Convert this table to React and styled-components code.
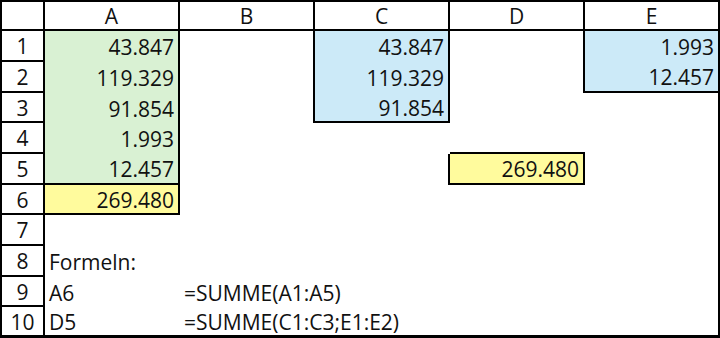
import styled, { createGlobalStyle } from "styled-components";

const GlobalStyle = createGlobalStyle`
  html, body {
    margin: 0;
    padding: 0;
    background: #ffffff;
  }
`;

const Sheet = styled.div`
  display: grid;
  grid-template-columns: 45px repeat(5, 135px);
  grid-template-rows: 31px 31px 31px 30px 31px 31px 30px 31px 31px 30px 31px;
  width: 720px;
  height: 338px;
  font-family: "Open Sans", "Liberation Sans", sans-serif;
  font-size: 21px;
  color: #111;
  box-sizing: border-box;
`;

const Cell = styled.div`
  box-sizing: border-box;
  display: flex;
  align-items: center;
  justify-content: ${(p) =>
    p.$align === "right" ? "flex-end" : p.$align === "center" ? "center" : "flex-start"};
  padding: 1px 4px 0 4px;
  background: ${(p) => p.$fill || "transparent"};
  border-right: ${(p) => (p.$r ? "2px solid #000" : "none")};
  border-bottom: ${(p) => (p.$b ? `${p.$b}px solid #000` : "none")};
  border-left: ${(p) => (p.$l ? "2px solid #000" : "none")};
  border-top: ${(p) => (p.$t ? "2px solid #000" : "none")};
  white-space: nowrap;
  overflow: visible;
  min-width: 0;
`;

const GREEN = "#d9f1d3";
const BLUE = "#cceaf8";
const YELLOW = "#fffb9d";

const cols = ["A", "B", "C", "D", "E"];

const values = {
  A1: "43.847",
  A2: "119.329",
  A3: "91.854",
  A4: "1.993",
  A5: "12.457",
  A6: "269.480",
  C1: "43.847",
  C2: "119.329",
  C3: "91.854",
  D5: "269.480",
  E1: "1.993",
  E2: "12.457",
  A8: "Formeln:",
  A9: "A6",
  A10: "D5",
  B9: "=SUMME(A1:A5)",
  B10: "=SUMME(C1:C3;E1:E2)",
};

const textCells = ["A8", "A9", "A10", "B9", "B10"];

const fills = {
  A1: GREEN, A2: GREEN, A3: GREEN, A4: GREEN, A5: GREEN,
  A6: YELLOW, D5: YELLOW,
  C1: BLUE, C2: BLUE, C3: BLUE,
  E1: BLUE, E2: BLUE,
};

// cells carrying a line on their right / bottom edge
const rightLines = ["A1", "A2", "A3", "A4", "A5", "A6", "B1", "B2", "B3", "C1", "C2", "C3", "C5", "D1", "D2", "D5"];
const bottomLines = ["A5", "A6", "C3", "E2", "D4", "D5"];

export default function App() {
  const cells = [];

  cells.push(<Cell key="corner" $l $t $r $b={2} />);
  cols.forEach((c) => {
    cells.push(
      <Cell key={c} $t $r $b={2} $align="center">
        {c}
      </Cell>
    );
  });

  for (let row = 1; row <= 10; row++) {
    const last = row === 10;
    cells.push(
      <Cell key={"h" + row} $l $r $b={last ? 3 : 2} $align="center">
        {row}
      </Cell>
    );
    cols.forEach((c) => {
      const id = c + row;
      cells.push(
        <Cell
          key={id}
          $fill={fills[id]}
          $r={c === "E" || rightLines.includes(id)}
          $b={last ? 3 : bottomLines.includes(id) ? 2 : 0}
          $align={textCells.includes(id) ? "left" : "right"}
        >
          {values[id]}
        </Cell>
      );
    });
  }

  return (
    <>
      <GlobalStyle />
      <Sheet>{cells}</Sheet>
    </>
  );
}
